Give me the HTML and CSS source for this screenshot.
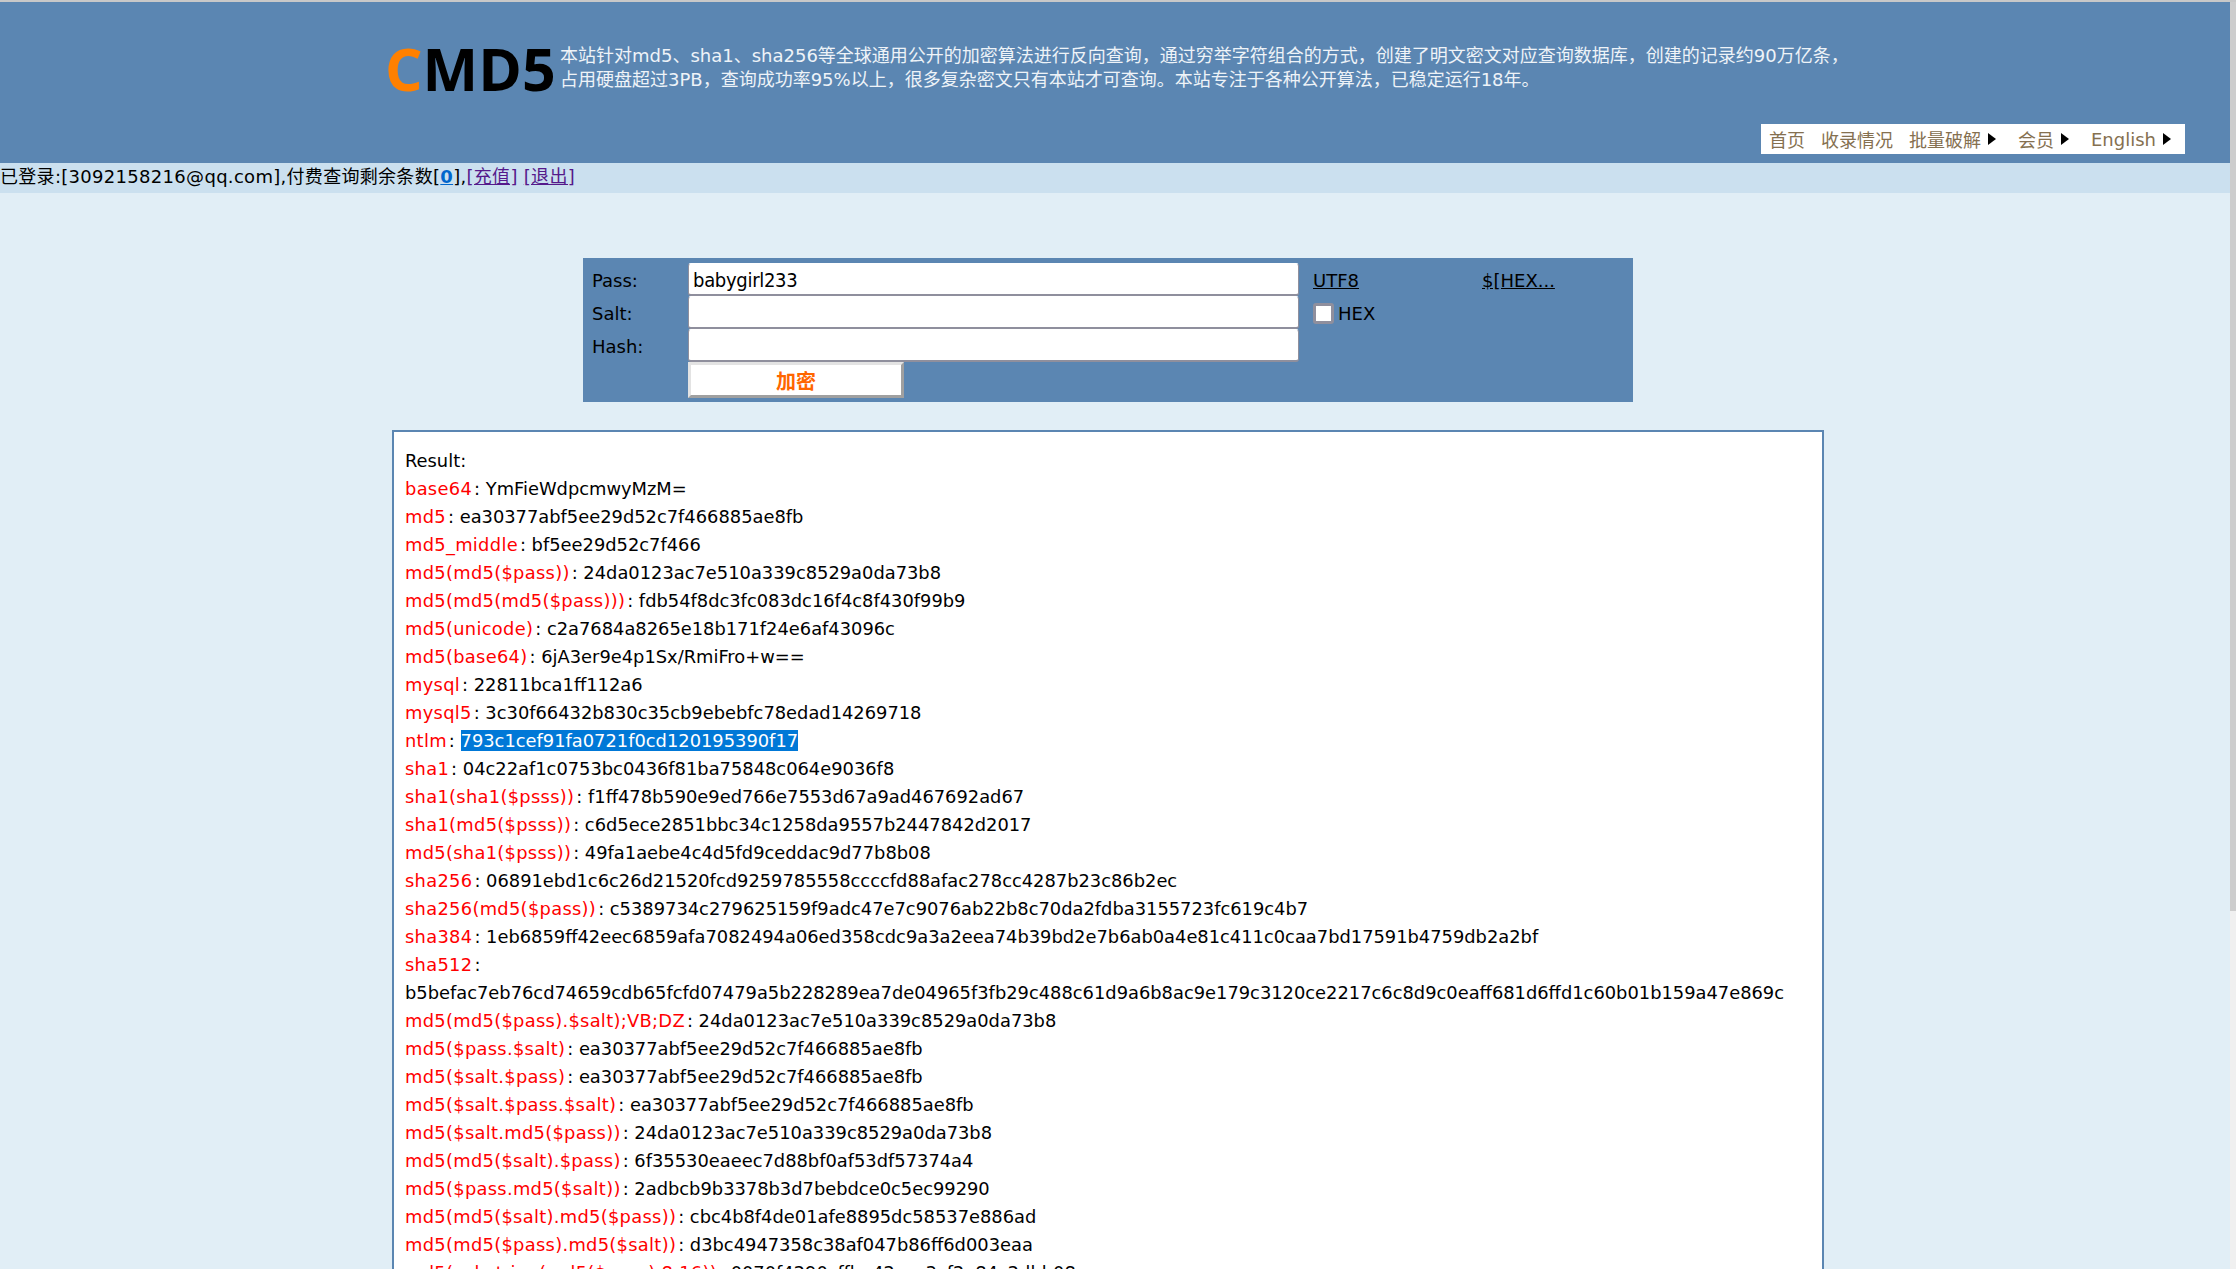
FILE: index.html
```html
<!DOCTYPE html>
<html lang="zh-CN">
<head>
    <meta charset="UTF-8">
    <title>CMD5</title>
    <link rel="stylesheet" href="styles.css">
</head>
<body>

<header class="top">
    <div class="brand">
        <div class="logo"><span class="logo-c">C</span>MD5</div>
        <div class="intro">本站针对md5、sha1、sha256等全球通用公开的加密算法进行反向查询，通过穷举字符组合的方式，创建了明文密文对应查询数据库，创建的记录约90万亿条，<br>占用硬盘超过3PB，查询成功率95%以上，很多复杂密文只有本站才可查询。本站专注于各种公开算法，已稳定运行18年。</div>
    </div>
    <ul class="menu">
        <li><a href="#">首页</a></li>
        <li><a href="#">收录情况</a></li>
        <li class="has-sub"><a href="#">批量破解<i class="arrow"></i></a></li>
        <li class="has-sub"><a href="#">会员<i class="arrow"></i></a></li>
        <li><a href="#">English<i class="arrow"></i></a></li>
    </ul>
</header>

<div class="login">已登录:[3092158216@qq.com],付费查询剩余条数[<a href="#" class="count">0</a>],<a href="#" class="visited">[充值]</a> <a href="#" class="visited">[退出]</a></div>

<form class="panel">
    <div class="labels">
        <label for="pass">Pass:</label>
        <label for="salt">Salt:</label>
        <label for="hash">Hash:</label>
    </div>
    <div class="fields">
        <input type="text" id="pass" value="babygirl233">
        <input type="text" id="salt">
        <input type="text" id="hash">
        <button type="button">加密</button>
    </div>
    <div class="options">
        <div class="option-row">
            <a href="#" class="utf">UTF8</a>
            <a href="#">$[HEX...</a>
        </div>
        <div class="hex-row">
            <span class="check"></span>
            <span>HEX</span>
        </div>
    </div>
</form>

<section class="result">
    <div class="line">Result:</div>
    <div class="line"><span class="algo">base64</span>: YmFieWdpcmwyMzM=</div>
    <div class="line"><span class="algo">md5</span>: ea30377abf5ee29d52c7f466885ae8fb</div>
    <div class="line"><span class="algo">md5_middle</span>: bf5ee29d52c7f466</div>
    <div class="line"><span class="algo">md5(md5($pass))</span>: 24da0123ac7e510a339c8529a0da73b8</div>
    <div class="line"><span class="algo">md5(md5(md5($pass)))</span>: fdb54f8dc3fc083dc16f4c8f430f99b9</div>
    <div class="line"><span class="algo">md5(unicode)</span>: c2a7684a8265e18b171f24e6af43096c</div>
    <div class="line"><span class="algo">md5(base64)</span>: 6jA3er9e4p1Sx/RmiFro+w==</div>
    <div class="line"><span class="algo">mysql</span>: 22811bca1ff112a6</div>
    <div class="line"><span class="algo">mysql5</span>: 3c30f66432b830c35cb9ebebfc78edad14269718</div>
    <div class="line"><span class="algo">ntlm</span>: <span class="picked">793c1cef91fa0721f0cd120195390f17</span></div>
    <div class="line"><span class="algo">sha1</span>: 04c22af1c0753bc0436f81ba75848c064e9036f8</div>
    <div class="line"><span class="algo">sha1(sha1($psss))</span>: f1ff478b590e9ed766e7553d67a9ad467692ad67</div>
    <div class="line"><span class="algo">sha1(md5($psss))</span>: c6d5ece2851bbc34c1258da9557b2447842d2017</div>
    <div class="line"><span class="algo">md5(sha1($psss))</span>: 49fa1aebe4c4d5fd9ceddac9d77b8b08</div>
    <div class="line"><span class="algo">sha256</span>: 06891ebd1c6c26d21520fcd9259785558ccccfd88afac278cc4287b23c86b2ec</div>
    <div class="line"><span class="algo">sha256(md5($pass))</span>: c5389734c279625159f9adc47e7c9076ab22b8c70da2fdba3155723fc619c4b7</div>
    <div class="line"><span class="algo">sha384</span>: 1eb6859ff42eec6859afa7082494a06ed358cdc9a3a2eea74b39bd2e7b6ab0a4e81c411c0caa7bd17591b4759db2a2bf</div>
    <div class="line"><span class="algo">sha512</span>:</div>
    <div class="line">b5befac7eb76cd74659cdb65fcfd07479a5b228289ea7de04965f3fb29c488c61d9a6b8ac9e179c3120ce2217c6c8d9c0eaff681d6ffd1c60b01b159a47e869c</div>
    <div class="line"><span class="algo">md5(md5($pass).$salt);VB;DZ</span>: 24da0123ac7e510a339c8529a0da73b8</div>
    <div class="line"><span class="algo">md5($pass.$salt)</span>: ea30377abf5ee29d52c7f466885ae8fb</div>
    <div class="line"><span class="algo">md5($salt.$pass)</span>: ea30377abf5ee29d52c7f466885ae8fb</div>
    <div class="line"><span class="algo">md5($salt.$pass.$salt)</span>: ea30377abf5ee29d52c7f466885ae8fb</div>
    <div class="line"><span class="algo">md5($salt.md5($pass))</span>: 24da0123ac7e510a339c8529a0da73b8</div>
    <div class="line"><span class="algo">md5(md5($salt).$pass)</span>: 6f35530eaeec7d88bf0af53df57374a4</div>
    <div class="line"><span class="algo">md5($pass.md5($salt))</span>: 2adbcb9b3378b3d7bebdce0c5ec99290</div>
    <div class="line"><span class="algo">md5(md5($salt).md5($pass))</span>: cbc4b8f4de01afe8895dc58537e886ad</div>
    <div class="line"><span class="algo">md5(md5($pass).md5($salt))</span>: d3bc4947358c38af047b86ff6d003eaa</div>
    <div class="line"><span class="algo">md5(substring(md5($pass),8,16))</span>: 0070f4290cffbe42ecc3cf2e84c2dbb08</div>
</section>

<div class="scrollbar"><div class="thumb"></div></div>

</body>
</html>
```

FILE: styles.css
```css
html {
    overflow: hidden;
}
body {
    margin: 0;
    background-color: #e1eef6;
    color: #000;
    font-family: "DejaVu Sans", "Noto Sans CJK SC", sans-serif;
    font-size: 18px;
}
a {
    color: #000;
}
.top {
    border-top: 2px solid #c8c8c8;
    background-color: #5b86b2;
    height: 163px;
    box-sizing: border-box;
    display: flex;
    flex-direction: column;
    justify-content: space-between;
    padding-right: 51px;
}
.brand {
    display: flex;
    align-items: center;
    padding: 42px 0 0 385px;
}
.logo {
    font-family: "Open Sans", sans-serif;
    font-size: 59px;
    font-weight: bold;
    line-height: 46px;
    width: 175px;
    flex: none;
    color: #000;
}
.logo-c {
    color: #ff8000;
}
.intro {
    color: #eef3f8;
    font-size: 18px;
    line-height: 24px;
    white-space: nowrap;
}
.menu {
    list-style-type: none;
    margin: 0 0 9px auto;
    padding: 0 14px 0 8px;
    display: flex;
    gap: 16px;
    background-color: #fff;
    height: 30px;
    align-items: center;
}
.menu .has-sub {
    margin-right: 6px;
}
.menu a {
    color: #857050;
    text-decoration: none;
    display: flex;
    align-items: center;
}
.arrow {
    border-left: 8px solid #000;
    border-top: 6.5px solid transparent;
    border-bottom: 6.5px solid transparent;
    margin-left: 7px;
}
.login {
    background-color: #cbe0ef;
    height: 30px;
    line-height: 28px;
    letter-spacing: 0.3px;
}
.login .count {
    color: #0066cc;
    font-weight: bold;
}
.login .visited {
    color: #551a8b;
}
.panel {
    width: 1050px;
    height: 144px;
    margin: 65px 0 0 583px;
    background-color: #5b86b2;
    display: flex;
    box-sizing: border-box;
    padding-top: 5px;
}
.labels {
    width: 105px;
    padding: 1px 0 0 9px;
    box-sizing: border-box;
}
.labels label {
    display: block;
    height: 33px;
    line-height: 33px;
}
.fields {
    width: 623px;
}
.fields input {
    display: block;
    width: 611px;
    height: 33px;
    box-sizing: border-box;
    border: 1px solid #8f8f9d;
    border-top-color: #fff;
    border-bottom-width: 2px;
    border-radius: 3px;
    padding: 1px 4px 0;
    font-family: "DejaVu Sans Condensed", "DejaVu Sans", sans-serif;
    font-size: 20px;
    letter-spacing: -0.3px;
    color: #000;
    background-color: #fff;
}
.fields button {
    display: block;
    width: 216px;
    height: 36px;
    padding: 0;
    box-sizing: border-box;
    border: 3px solid;
    border-color: #e3e3e3 #a0a0a0 #a0a0a0 #e3e3e3;
    background-color: #fff;
    color: #ff6600;
    font-family: "Noto Sans CJK SC", sans-serif;
    font-size: 20px;
    font-weight: bold;
}
.options {
    padding: 1px 0 0 1px;
}
.option-row {
    display: flex;
    height: 33px;
    line-height: 33px;
}
.utf {
    width: 169px;
    margin-left: 1px;
}
.hex-row {
    display: flex;
    align-items: center;
    gap: 4px;
    height: 33px;
    margin-left: 1px;
}
.check {
    width: 21px;
    height: 21px;
    box-sizing: border-box;
    border: 3px solid #8f8f9d;
    border-radius: 3px;
    background-color: #fff;
}
.result {
    width: 1432px;
    margin: 28px 0 0 392px;
    box-sizing: border-box;
    border: 2px solid #5b86b2;
    background-color: #fff;
    padding: 15px 12px 40px 11px;
    font-size: 17.85px;
}
.line {
    height: 28px;
    line-height: 28px;
    white-space: nowrap;
}
.algo {
    color: #ff0000;
    letter-spacing: 0.3px;
    margin-right: 2px;
}
.picked {
    background-color: #0078d7;
    color: #fff;
}
.scrollbar {
    position: fixed;
    top: 2px;
    right: 0;
    bottom: 0;
    width: 6px;
    background-color: #f0f0f0;
}
.thumb {
    height: 909px;
    background-color: #cdcdcd;
}
```
